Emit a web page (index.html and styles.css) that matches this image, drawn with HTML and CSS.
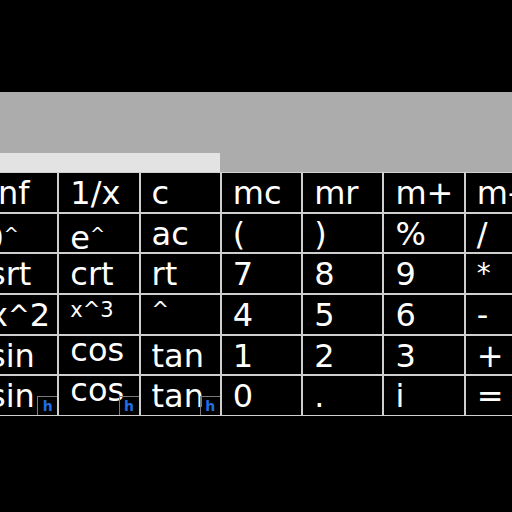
FILE: index.html
```html
<!DOCTYPE html>
<html>
<head>
<meta charset="utf-8">
<link rel="stylesheet" href="styles.css">
</head>
<body>
<div class="calc">
  <div class="display"></div>
  <div class="entry-row"><div class="entry"></div></div>
  <div class="keys">
    <div class="key">inf</div>
    <div class="key">1/x</div>
    <div class="key">c</div>
    <div class="key">mc</div>
    <div class="key">mr</div>
    <div class="key">m+</div>
    <div class="key">m-</div>

    <div class="key shift">10<span class="car">^</span></div>
    <div class="key">e<span class="car">^</span></div>
    <div class="key">ac</div>
    <div class="key">(</div>
    <div class="key">)</div>
    <div class="key">%</div>
    <div class="key">/</div>

    <div class="key">srt</div>
    <div class="key">crt</div>
    <div class="key">rt</div>
    <div class="key">7</div>
    <div class="key">8</div>
    <div class="key">9</div>
    <div class="key star">*</div>

    <div class="key">x<span class="car2">^</span>2</div>
    <div class="key sm">x^3</div>
    <div class="key sm">^</div>
    <div class="key">4</div>
    <div class="key">5</div>
    <div class="key">6</div>
    <div class="key">-</div>

    <div class="key">sin</div>
    <div class="key raised">cos</div>
    <div class="key">tan</div>
    <div class="key">1</div>
    <div class="key">2</div>
    <div class="key">3</div>
    <div class="key">+</div>

    <div class="key">sin<span class="hyp">h</span></div>
    <div class="key raised">cos<span class="hyp">h</span></div>
    <div class="key">tan<span class="hyp">h</span></div>
    <div class="key">0</div>
    <div class="key">.</div>
    <div class="key">i</div>
    <div class="key">=</div>
  </div>
</div>
</body>
</html>
```

FILE: styles.css
```css
html, body {
  margin: 0;
  padding: 0;
  background: #000;
  overflow: hidden;
  width: 512px;
  height: 512px;
}

.calc {
  padding-top: 92px;
}

.display {
  height: 60px;
  background: #acacac;
}

.entry-row {
  height: 20px;
  background: #acacac;
  display: flex;
  align-items: flex-end;
}

.entry {
  width: 220px;
  height: 19px;
  background: #e3e3e3;
}

.keys {
  margin-left: -23px;
  width: 569px;
  display: grid;
  grid-template-columns: repeat(7, 1fr);
  grid-auto-rows: 40.67px;
}

.key {
  position: relative;
  box-sizing: border-box;
  border: 1px solid #cfcfcf;
  background: #000;
  color: #fff;
  font-family: "DejaVu Sans", sans-serif;
  font-size: 32px;
  line-height: 34px;
  padding: 3px 0 0 11px;
  white-space: nowrap;
  overflow: hidden;
}

.key.shift {
  text-indent: -26px;
}

.key.sm {
  font-size: 21px;
  line-height: 26px;
  padding-top: 2px;
}

.key.star {
  font-size: 28px;
}

.key.raised {
  padding-top: 0;
  line-height: 29px;
}

.car {
  font-size: 18px;
  vertical-align: 9px;
}

.car2 {
  font-size: 26px;
  vertical-align: 2px;
}

.hyp {
  position: absolute;
  right: 0;
  bottom: 0;
  width: 20px;
  height: 19px;
  box-sizing: border-box;
  border-top: 1px solid #7a7a7a;
  border-left: 1px solid #7a7a7a;
  color: #1f6fe5;
  font-family: "DejaVu Sans", sans-serif;
  font-weight: bold;
  font-size: 14px;
  line-height: 19px;
  text-align: center;
  text-indent: 0;
}
```
